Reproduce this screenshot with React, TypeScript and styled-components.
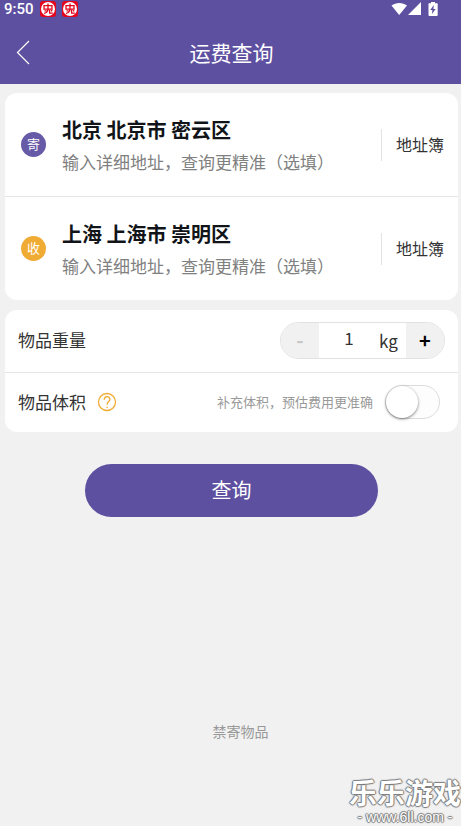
import React, { useState } from "react";
import styled, { createGlobalStyle } from "styled-components";

const purple = "#5e50a1";
const amber = "#efab34";

const GlobalStyle = createGlobalStyle`
  *, *::before, *::after { box-sizing: border-box; }
  body {
    margin: 0;
    background: #f1f1f1;
    color: #333;
    font-family: "Noto Sans CJK SC", sans-serif;
  }
  button, input { font-family: inherit; margin: 0; padding: 0; border: 0; background: none; }
`;

const Page = styled.div`
  position: relative;
  min-height: 100vh;
  display: flex;
  flex-direction: column;
`;

const StatusBar = styled.div`
  display: flex;
  align-items: center;
  justify-content: space-between;
  height: 20px;
  padding: 0 22px 2px 4px;
  background: ${purple};
  color: #fff;
`;

const StatusGroup = styled.div`
  display: flex;
  align-items: center;
  gap: 6px;
  height: 18px;
`;

const Clock = styled.span`
  font: 500 15px/18px Roboto, sans-serif;
`;

const Header = styled.header`
  display: grid;
  grid-template-columns: 48px 1fr 46px;
  align-items: center;
  height: 64px;
  background: ${purple};
  color: #fff;
`;

const BackButton = styled.button`
  display: flex;
  align-items: center;
  height: 44px;
  padding-left: 16px;
`;

const Title = styled.h1`
  margin: 0;
  font-size: 21px;
  font-weight: 400;
  line-height: 32px;
  text-align: center;
`;

const Main = styled.main`
  flex: 1;
  display: flex;
  flex-direction: column;
  gap: 10px;
  padding: 9px 3px 85px 5px;
`;

const Card = styled.section`
  border-radius: 12px;
  background: #fff;
`;

const AddressRow = styled.div`
  display: flex;
  align-items: center;
  height: 103px;
  padding: 0 14px 0 16px;
  & + & { border-top: 1px solid #e6e6e6; height: 104px; }
`;

const Badge = styled.span<{ $color: string }>`
  width: 25px;
  height: 25px;
  margin-right: 16px;
  border-radius: 50%;
  background: ${(p) => p.$color};
  color: #fff;
  font-size: 13px;
  line-height: 23px;
  text-align: center;
`;

const AddressText = styled.div`
  flex: 1;
  min-width: 0;
  display: flex;
  flex-direction: column;
  gap: 4px;
`;

const Region = styled.button`
  color: #111418;
  font-size: 20px;
  font-weight: 700;
  line-height: 30px;
  text-align: left;
`;

const DetailInput = styled.input`
  width: 100%;
  height: 26px;
  color: #333;
  font-size: 17px;
  &::placeholder { color: #808080; opacity: 1; }
`;

const BookButton = styled.button`
  height: 32px;
  padding: 0 0 2px 14px;
  border-left: 1px solid #e2e2e2;
  color: #333;
  font-size: 16px;
  line-height: 28px;
`;

const OptionRow = styled.div`
  display: flex;
  align-items: center;
  height: 62px;
  padding: 0 13px 2px;
  & + & { border-top: 1px solid #e6e6e6; height: 60px; padding-right: 18px; }
`;

const OptionLabel = styled.label`
  font-size: 17px;
  line-height: 26px;
`;

const HelpButton = styled.button`
  display: flex;
  margin-left: 11px;
`;

const Stepper = styled.div`
  display: flex;
  height: 37px;
  margin-left: auto;
  overflow: hidden;
  border: 1px solid #e2e2e2;
  border-radius: 19px;
`;

const StepButton = styled.button`
  width: 38px;
  background: #f1f1f1;
  color: #000;
  font-size: 20px;
  font-weight: 700;
  line-height: 32px;
  &:disabled { color: #c8c8c8; }
`;

const WeightInput = styled.input`
  width: 60px;
  height: 30px;
  color: #333;
  font-size: 17px;
  text-align: center;
`;

const Unit = styled.span`
  width: 27px;
  font-size: 17px;
  line-height: 35px;
`;

const Hint = styled.span`
  margin-left: auto;
  margin-right: 12px;
  color: #999;
  font-size: 13px;
  line-height: 20px;
`;

const Switch = styled.input`
  appearance: none;
  width: 55px;
  height: 34px;
  border: 1px solid #dcdcdc;
  border-radius: 17px;
  background: #fdfdfd;
  &::before {
    content: "";
    display: block;
    width: 32px;
    height: 32px;
    border-radius: 50%;
    background: #fff;
    box-shadow: 0 1px 3px rgba(0, 0, 0, 0.5);
  }
  &:checked { background: ${purple}; }
  &:checked::before { margin-left: 21px; }
`;

const SubmitButton = styled.button`
  height: 53px;
  margin: 22px 80px 0;
  padding-bottom: 2px;
  border-radius: 27px;
  background: ${purple};
  color: #fff;
  font-size: 20px;
  line-height: 30px;
`;

const FooterLink = styled.a`
  align-self: center;
  margin-top: auto;
  padding-left: 18px;
  color: #999;
  font-size: 14px;
  line-height: 20px;
  text-decoration: none;
`;

const Watermark = styled.div`
  position: absolute;
  right: 0;
  bottom: 0;
  color: #fff;
  text-align: center;
  text-shadow: 1px 0 1px #777, -1px 0 1px #777, 0 1px 1px #777, 0 -1px 1px #777;
`;

const WatermarkName = styled.div`
  font-size: 28px;
  font-weight: 700;
  line-height: 32px;
`;

const WatermarkSite = styled.div`
  font: 400 14px/16px "Liberation Sans", sans-serif;
  padding: 1px 0;
`;

const AppIcon = () => (
  <svg width="16" height="16" viewBox="0 0 16 16" aria-hidden="true">
    <rect width="16" height="16" rx="3" fill="#e3061c" />
    <circle cx="8" cy="8" r="7" fill="#fff" />
    <g fill="none" stroke="#e3061c" strokeWidth="1.3">
      <path d="M4 4.600h8v3.600H4z" />
      <path d="M8 2.500v6.200Q7.500 11.500 4 12.500" />
      <path d="M9.600 8.500v3.700h3.200" />
      <path d="M4.500 9.800h2M11 9.300l1.300 1" />
    </g>
  </svg>
);

const SignalIcons = () => (
  <svg width="48" height="16" viewBox="0 0 48 16" fill="#fff" aria-hidden="true">
    <path d="M0.500 4.500C5 1 11.500 1 16 4.500L8.200 14z" />
    <path d="M30 1v13H17z" />
    <path d="M38 2.200h2V1h4v1.200h2q.7 0 .7.800v11q0 1-1 1h-7.200q-1 0-1-1V3q0-.8.500-.8z" />
    <path d="M42.800 4l-3.600 5h2.200l-.5 4 3.800-5h-2.300z" fill={purple} />
  </svg>
);

const BackIcon = () => (
  <svg width="15" height="26" viewBox="0 0 15 26" fill="none" stroke="#fff" strokeWidth="1.2" aria-hidden="true">
    <path d="M13 2L1.500 13.500L13 25" />
  </svg>
);

const HelpIcon = () => (
  <svg width="20" height="20" viewBox="0 0 20 20" fill="none" stroke={amber} aria-hidden="true">
    <circle cx="10" cy="10" r="8.500" strokeWidth="1.300" />
    <path d="M7.200 7.800C7.200 3.600 12.900 3.600 12.900 7.400C12.900 9.600 10.100 9.700 10.100 12.800" strokeWidth="1.300" />
    <circle cx="10.100" cy="15.200" r=".8" fill={amber} stroke="none" />
  </svg>
);

const addresses = [
  { tag: "寄", color: "#675aa6", region: "北京 北京市 密云区" },
  { tag: "收", color: amber, region: "上海 上海市 崇明区" },
];

export default function App() {
  const [weight, setWeight] = useState(1);
  return (
    <Page>
      <GlobalStyle />
      <StatusBar>
        <StatusGroup>
          <Clock>9:50</Clock>
          <AppIcon />
          <AppIcon />
        </StatusGroup>
        <StatusGroup>
          <SignalIcons />
        </StatusGroup>
      </StatusBar>
      <Header>
        <BackButton type="button" aria-label="返回">
          <BackIcon />
        </BackButton>
        <Title>运费查询</Title>
      </Header>
      <Main>
        <Card>
          {addresses.map((a) => (
            <AddressRow key={a.tag}>
              <Badge $color={a.color}>{a.tag}</Badge>
              <AddressText>
                <Region type="button">{a.region}</Region>
                <DetailInput aria-label={a.region} placeholder="输入详细地址，查询更精准（选填）" />
              </AddressText>
              <BookButton type="button">地址簿</BookButton>
            </AddressRow>
          ))}
        </Card>
        <Card>
          <OptionRow>
            <OptionLabel htmlFor="weight">物品重量</OptionLabel>
            <Stepper>
              <StepButton type="button" aria-label="减少" disabled={weight <= 1} onClick={() => setWeight(weight - 1)}>
                -
              </StepButton>
              <WeightInput
                id="weight"
                inputMode="numeric"
                value={weight}
                onChange={(e) => setWeight(Number(e.target.value) || 1)}
              />
              <Unit>kg</Unit>
              <StepButton type="button" aria-label="增加" onClick={() => setWeight(weight + 1)}>
                +
              </StepButton>
            </Stepper>
          </OptionRow>
          <OptionRow>
            <OptionLabel htmlFor="volume">物品体积</OptionLabel>
            <HelpButton type="button" aria-label="帮助">
              <HelpIcon />
            </HelpButton>
            <Hint>补充体积，预估费用更准确</Hint>
            <Switch id="volume" type="checkbox" role="switch" />
          </OptionRow>
        </Card>
        <SubmitButton type="button">查询</SubmitButton>
        <FooterLink href="#prohibited">禁寄物品</FooterLink>
      </Main>
      <Watermark>
        <WatermarkName>乐乐游戏</WatermarkName>
        <WatermarkSite>- www.6ll.com -</WatermarkSite>
      </Watermark>
    </Page>
  );
}
